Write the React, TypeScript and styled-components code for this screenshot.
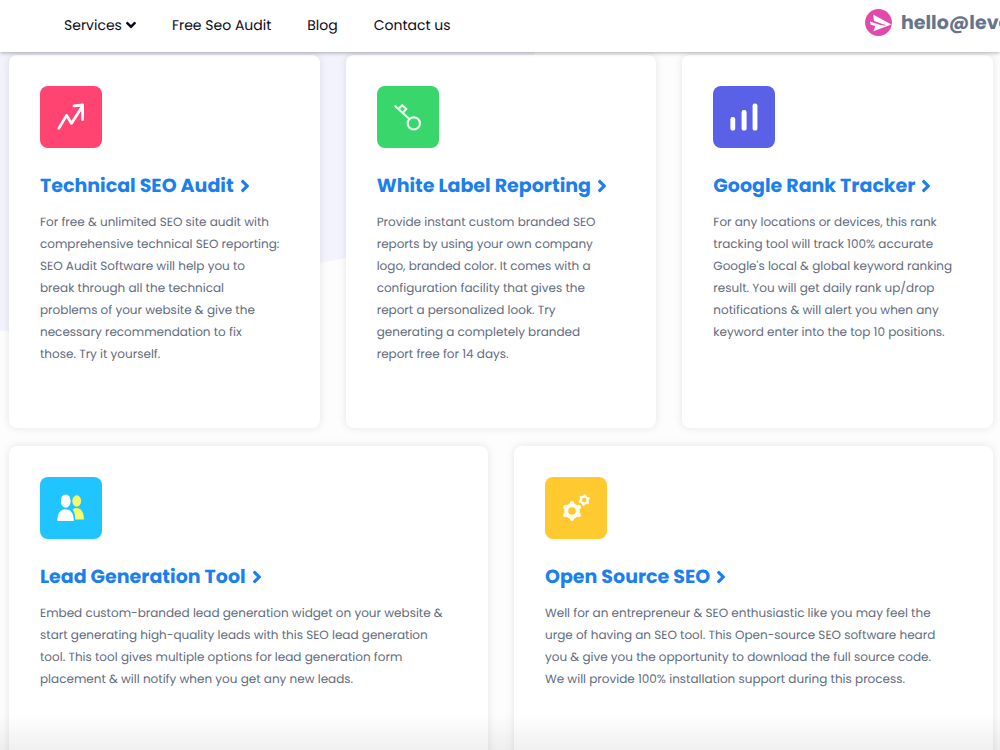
import React from "react";
import styled, { createGlobalStyle } from "styled-components";
import { FaAngleDown, FaAngleRight } from "react-icons/fa";

const GlobalStyle = createGlobalStyle`
  *, *::before, *::after { box-sizing: border-box; }
  html { scrollbar-width: none; }
  body {
    margin: 0;
    background: #fdfdfd;
    color: #5f6b80;
    font-family: Poppins, Inter, "Liberation Sans", sans-serif;
    text-rendering: geometricPrecision;
    overflow-x: hidden;
  }
`;

const Header = styled.header`
  position: sticky;
  top: 0;
  z-index: 2;
  display: flex;
  justify-content: space-between;
  height: 52px;
  padding-left: 64px;
  background: #fff;
  box-shadow: 0 1px 4px rgba(0, 0, 0, 0.3);
`;

const Nav = styled.nav`
  display: flex;
  align-items: center;
  gap: 36px;
  height: 50px;
`;

const NavLink = styled.a`
  display: flex;
  align-items: center;
  gap: 4px;
  color: #0b0b1a;
  font-size: 14px;
  line-height: 20px;
  text-decoration: none;
  white-space: nowrap;

  svg { width: 10px; height: 16px; }
`;

const EmailLink = styled.a`
  display: flex;
  align-items: center;
  gap: 9px;
  flex: 0 0 135px;
  height: 44px;
  overflow: hidden;
  color: #66758c;
  font-size: 19px;
  font-weight: 700;
  text-decoration: none;
  white-space: nowrap;

  svg { flex: none; }
`;

const Page = styled.main`
  position: relative;
  padding: 3px 7px 20px 9px;
`;

const Wave = styled.svg`
  position: absolute;
  top: 0;
  left: 0;
  z-index: -1;
`;

const Cards = styled.div`
  display: grid;
  grid-template-columns: repeat(6, minmax(0, 1fr));
  gap: 18px 26px;
`;

const Card = styled.article<{ $span: number }>`
  grid-column: span ${(p) => p.$span};
  min-height: 373px;
  padding: 31px;
  border-radius: 8px;
  background: #fff;
  box-shadow: 0 0 8px rgba(0, 0, 0, 0.1);
`;

const Tile = styled.div<{ $color: string }>`
  width: 62px;
  height: 62px;
  border-radius: 8px;
  background: ${(p) => p.$color};

  svg { display: block; }
`;

const Title = styled.h2`
  margin: 23px 0 11px;
  font-size: 19px;
  font-weight: 700;
  line-height: 30px;
`;

const TitleLink = styled.a`
  display: flex;
  align-items: center;
  gap: 6px;
  color: #1c7fee;
  text-decoration: none;
  white-space: nowrap;

  svg { width: 10px; height: 20px; }
`;

const Text = styled.p`
  margin: 0;
  font-size: 12px;
  line-height: 22px;
  white-space: pre-line;
`;

const BottomFade = styled.div`
  position: fixed;
  right: 0;
  bottom: 0;
  left: 0;
  z-index: 1;
  height: 36px;
  background: linear-gradient(rgba(0, 0, 0, 0), rgba(0, 0, 0, 0.06));
  pointer-events: none;
`;

const TrendIcon = () => (
  <svg width="62" height="62" fill="none" stroke="#fff" strokeWidth="2.8" strokeLinecap="round" strokeLinejoin="round" aria-hidden="true">
    <path d="M18.8 42.4 26.6 29.4 31.4 37.4 42.3 20.4" />
    <path d="M34 19.8 42.6 19 42.6 33.6" />
  </svg>
);

const KeyIcon = () => (
  <svg width="62" height="62" fill="none" stroke="#e9fbee" strokeWidth="2.2" strokeLinecap="round" strokeLinejoin="round" aria-hidden="true">
    <circle cx="36.8" cy="37.4" r="6.1" />
    <path d="M18.4 20.2 32.3 33" />
    <path d="M22 22.6 25.2 19.2 29.4 23 26 26.6" />
  </svg>
);

const BarsIcon = () => (
  <svg width="62" height="62" fill="#fff" aria-hidden="true">
    <rect x="17.4" y="31" width="4.8" height="13.6" rx="2.2" />
    <rect x="28.6" y="24" width="5" height="20.6" rx="2.2" />
    <rect x="39.6" y="17.4" width="4.8" height="27.2" rx="2.2" />
  </svg>
);

const PeopleIcon = () => (
  <svg width="62" height="62" aria-hidden="true">
    <g fill="#f4fb6a">
      <ellipse cx="36.7" cy="24" rx="4.4" ry="5.7" />
      <path d="M32.6 32.4Q34.4 31 36.6 31C41.2 31 44 35.6 44 42.4H35.2Q35.4 36.2 32.6 32.4Z" />
    </g>
    <g fill="#fff">
      <ellipse cx="25.7" cy="24.1" rx="4.9" ry="6.7" />
      <path d="M17.3 44C17.3 36 20.6 32.2 25.5 32.2S33.8 36 33.8 44Z" />
    </g>
  </svg>
);

const Gear = ({ x, y, r, turn }: { x: number; y: number; r: number; turn: number }) => (
  <g transform={`translate(${x} ${y}) rotate(${turn}) scale(${r / 10})`} stroke="#fffdf2" fill="none">
    <circle r="5.9" strokeWidth="4" />
    {[0, 60, 120, 180, 240, 300].map((angle) => (
      <path key={angle} d="M0 -7V-8" transform={`rotate(${angle})`} strokeWidth="4.4" strokeLinecap="round" />
    ))}
  </g>
);

const GearsIcon = () => (
  <svg width="62" height="62" aria-hidden="true">
    <Gear x={27} y={34} r={9.8} turn={0} />
    <Gear x={39.2} y={23} r={5.8} turn={10} />
  </svg>
);

const MailIcon = () => (
  <svg width="27" height="27" viewBox="0 0 27 27" aria-hidden="true">
    <circle cx="13.5" cy="13.5" r="13.4" fill="#e24aa9" />
    <path d="M8.2 5.6 26.4 15.6 19.6 16.6 9 12Z" fill="#fff" />
    <path d="M5 12.6 18.4 17 13 17.8 5.6 15.8Z" fill="#fff" />
    <path d="M8.4 22.2 10.4 17 26.4 15.6Z" fill="#fff" />
    <path d="M8.4 12.6 20.4 16.4" stroke="#e24aa9" strokeWidth="0.9" />
  </svg>
);

const services = [
  {
    title: "Technical SEO Audit",
    color: "#ff4471",
    span: 2,
    Icon: TrendIcon,
    text: `For free & unlimited SEO site audit with
comprehensive technical SEO reporting:
SEO Audit Software will help you to
break through all the technical
problems of your website & give the
necessary recommendation to fix
those. Try it yourself.`,
  },
  {
    title: "White Label Reporting",
    color: "#38d66b",
    span: 2,
    Icon: KeyIcon,
    text: `Provide instant custom branded SEO
reports by using your own company
logo, branded color. It comes with a
configuration facility that gives the
report a personalized look. Try
generating a completely branded
report free for 14 days.`,
  },
  {
    title: "Google Rank Tracker",
    color: "#5a61e6",
    span: 2,
    Icon: BarsIcon,
    text: `For any locations or devices, this rank
tracking tool will track 100% accurate
Google's local & global keyword ranking
result. You will get daily rank up/drop
notifications & will alert you when any
keyword enter into the top 10 positions.`,
  },
  {
    title: "Lead Generation Tool",
    color: "#20c4ff",
    span: 3,
    Icon: PeopleIcon,
    text: `Embed custom-branded lead generation widget on your website &
start generating high-quality leads with this SEO lead generation
tool. This tool gives multiple options for lead generation form
placement & will notify when you get any new leads.`,
  },
  {
    title: "Open Source SEO",
    color: "#ffca30",
    span: 3,
    Icon: GearsIcon,
    text: `Well for an entrepreneur & SEO enthusiastic like you may feel the
urge of having an SEO tool. This Open-source SEO software heard
you & give you the opportunity to download the full source code.
We will provide 100% installation support during this process.`,
  },
];

export default function App() {
  return (
    <>
      <GlobalStyle />
      <Header>
        <Nav aria-label="Main">
          <NavLink href="#services">
            Services <FaAngleDown aria-hidden="true" />
          </NavLink>
          <NavLink href="#audit">Free Seo Audit</NavLink>
          <NavLink href="#blog">Blog</NavLink>
          <NavLink href="#contact">Contact us</NavLink>
        </Nav>
        <EmailLink href="#email">
          <MailIcon />
          hello@leve
        </EmailLink>
      </Header>
      <Page id="services">
        <Wave width="540" height="290" aria-hidden="true">
          <path d="M0 0H535C520 110 450 190 345 206C250 222 180 272 0 279Z" fill="#f2f3fc" />
        </Wave>
        <Cards>
          {services.map(({ title, color, span, Icon, text }) => (
            <Card key={title} $span={span}>
              <Tile $color={color}>
                <Icon />
              </Tile>
              <Title>
                <TitleLink href="#details">
                  {title}
                  <FaAngleRight aria-hidden="true" />
                </TitleLink>
              </Title>
              <Text>{text}</Text>
            </Card>
          ))}
        </Cards>
      </Page>
      <BottomFade />
    </>
  );
}
